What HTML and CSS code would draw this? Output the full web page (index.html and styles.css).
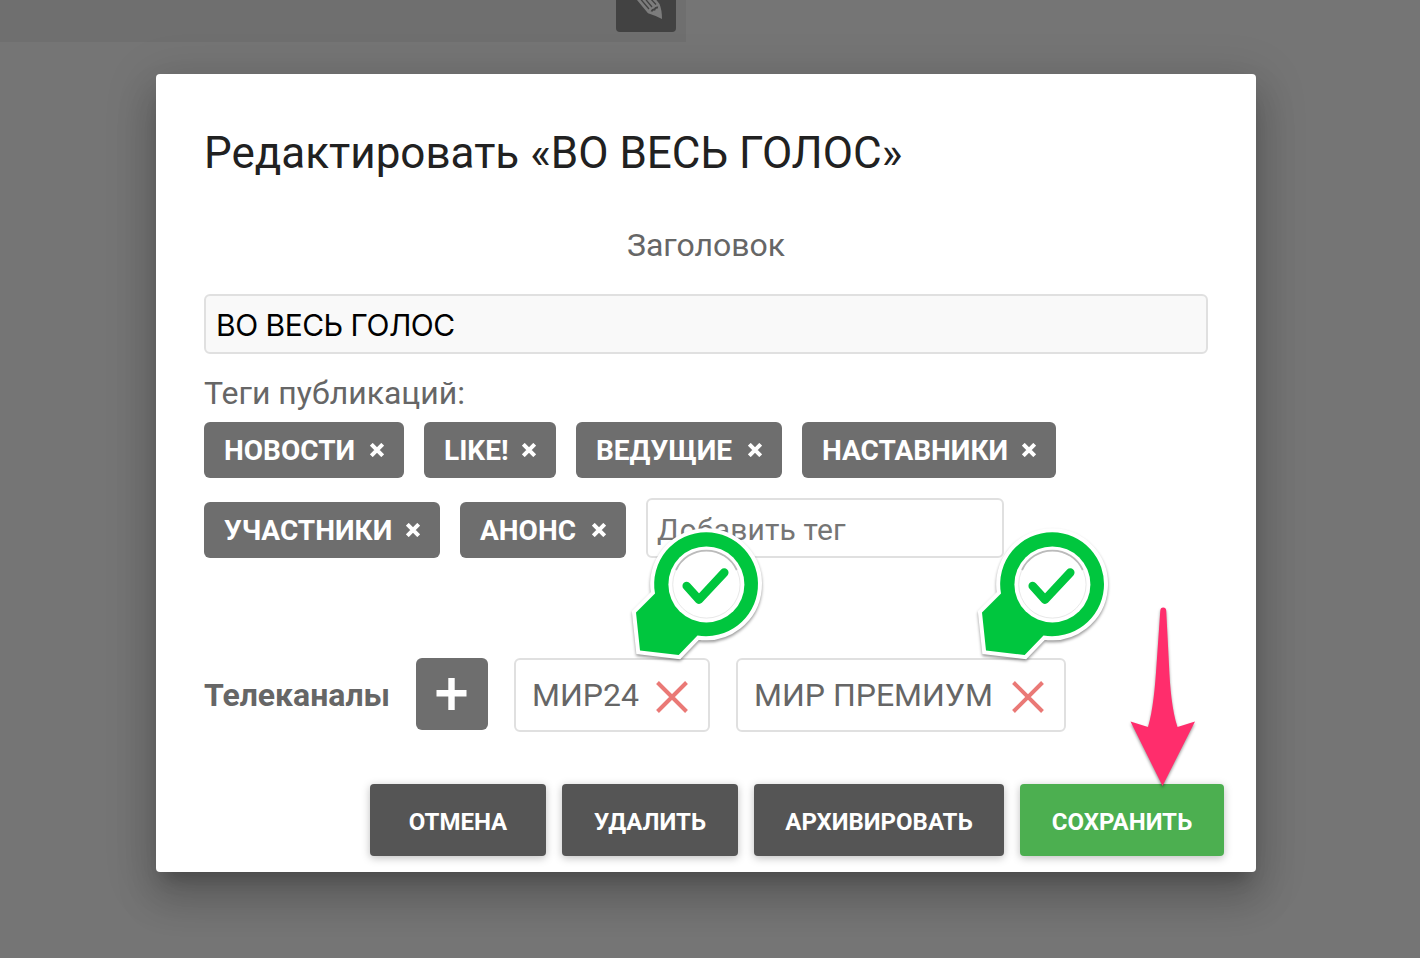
FILE: index.html
```html
<!DOCTYPE html>
<html lang="ru">
<head>
<meta charset="utf-8">
<title>Редактировать</title>
<link rel="stylesheet" href="styles.css">
</head>
<body>
<div class="page">
  <div class="strip">
    <span class="edit"><svg width="60" height="32" viewBox="0 0 60 32"><path d="M13-10L21 0L32 13.3Q39 15.5 46 19Q46 10 43.5 4L31-12Z" fill="#7c7c7c"/><path d="M24.5-1L33 9M28.5-2L36 7M33-3L40 4.5" stroke="#424242" stroke-width="1.3"/><path d="M35.5 11.5Q36.5 9 38.5 9.5Q39.5 7 42 7.5" stroke="#424242" stroke-width="2" fill="none"/></svg></span>
  </div>
  <main class="dialog">
    <h1 class="title">Редактировать «ВО ВЕСЬ ГОЛОС»</h1>
    <label class="caption">Заголовок</label>
    <input class="field" value="ВО ВЕСЬ ГОЛОС">
    <div class="tags-label">Теги публикаций:</div>
    <div class="tags">
      <span class="tag w200">НОВОСТИ<svg class="x" viewBox="0 0 14 14"><path d="M1.3 1.3L12.7 12.7M12.7 1.3L1.3 12.7"/></svg></span>
      <span class="tag w132">LIKE!<svg class="x" viewBox="0 0 14 14"><path d="M1.3 1.3L12.7 12.7M12.7 1.3L1.3 12.7"/></svg></span>
      <span class="tag w206">ВЕДУЩИЕ<svg class="x" viewBox="0 0 14 14"><path d="M1.3 1.3L12.7 12.7M12.7 1.3L1.3 12.7"/></svg></span>
      <span class="tag w254">НАСТАВНИКИ<svg class="x" viewBox="0 0 14 14"><path d="M1.3 1.3L12.7 12.7M12.7 1.3L1.3 12.7"/></svg></span>
    </div>
    <div class="tags second">
      <span class="tag w236">УЧАСТНИКИ<svg class="x" viewBox="0 0 14 14"><path d="M1.3 1.3L12.7 12.7M12.7 1.3L1.3 12.7"/></svg></span>
      <span class="tag w166">АНОНС<svg class="x" viewBox="0 0 14 14"><path d="M1.3 1.3L12.7 12.7M12.7 1.3L1.3 12.7"/></svg></span>
      <input class="add-tag" placeholder="Добавить тег">
    </div>
    <div class="channels">
      <b class="ch-label">Телеканалы</b>
      <button class="plus"><svg width="32" height="32" viewBox="0 0 32 32"><path d="M.5 15.3H30.5M15.5 0V32" stroke="#fff" stroke-width="6.4"/></svg></button>
      <span class="channel c1">МИР24<svg class="cross" viewBox="0 0 32 32"><path d="M1.5 1.5L30.5 30.5M30.5 1.5L1.5 30.5"/></svg></span>
      <span class="channel c2">МИР ПРЕМИУМ<svg class="cross" viewBox="0 0 32 32"><path d="M1.5 1.5L30.5 30.5M30.5 1.5L1.5 30.5"/></svg></span>
    </div>
    <div class="actions">
      <button class="btn w176">ОТМЕНА</button>
      <button class="btn w176">УДАЛИТЬ</button>
      <button class="btn w250">АРХИВИРОВАТЬ</button>
      <button class="btn save">СОХРАНИТЬ</button>
    </div>
  </main>
  <svg class="mark m1" viewBox="0 0 160 150"><use href="#stamp"/></svg>
  <svg class="mark m2" viewBox="0 0 160 150"><use href="#stamp"/></svg>
  <svg class="arrow" viewBox="0 0 90 200"><path d="M30.3 20.5Q30.5 17.5 33.2 17.5Q36 17.5 36.2 20.5L39 75C40 98 42 120 47.5 137L65 131.5L32.5 196L.5 131.5L18 137C23 120 25 98 26.5 75Z" fill="#ff2d6c"/></svg>
  <svg width="0" height="0" class="defs"><defs><g id="stamp">
    <path d="M86.4 12.2A52 52 0 1 1 77.5 115.5L58.7 135L20 130.5L16 92.5L35 73.5A52 52 0 0 1 86.4 12.2Z" fill="#00c63e" stroke="#fff" stroke-width="8" stroke-linejoin="miter" paint-order="stroke"/>
    <circle cx="86.4" cy="64.4" r="38" fill="#fff"/>
    <circle cx="86.4" cy="64.4" r="33.7" fill="none" stroke="#e8e8e8" stroke-width="1"/>
    <path d="M56 50A33.5 33.5 0 0 1 116.8 50" fill="none" stroke="#bbb" stroke-width="1.8"/>
    <path d="M66.7 66L79 79.7L104.3 52.5" fill="none" stroke="#00c63e" stroke-width="8.5" stroke-linecap="round" stroke-linejoin="round"/>
  </g></defs></svg>
</div>
</body>
</html>
```

FILE: styles.css
```css
* { box-sizing: border-box; }
body { margin: 0; font-family: Roboto, sans-serif; color: #666; }
.page { position: relative; width: 1420px; height: 958px; overflow: hidden; background: #757575; }
.strip { width: 686px; height: 42px; background: #6f6f6f; display: flex; justify-content: flex-end; padding-right: 10px; }
.edit { width: 60px; height: 32px; background: #424242; border-radius: 0 0 4px 4px; }
.edit svg { display: block; }
.dialog { width: 1100px; height: 798px; margin: 32px 0 0 156px; padding: 48px 32px 16px 48px; background: #fff; border-radius: 4px; display: flex; flex-direction: column; box-shadow: 0 14px 16px -8px rgba(0,0,0,.2), 0 26px 38px 4px rgba(0,0,0,.14), 0 10px 48px 8px rgba(0,0,0,.12); }
.title { margin: 0; height: 64px; font-weight: 400; font-size: 44px; line-height: 63px; color: #212121; white-space: nowrap; }
.caption { width: 1004px; margin-top: 40px; height: 38px; text-align: center; font-size: 32px; line-height: 38px; }
.field { width: 1004px; height: 60px; margin-top: 30px; padding: 2px 10px 0; border: 2px solid #e0e0e0; border-radius: 6px; background: #f9f9f9; font: 30px Inter, Roboto, sans-serif; letter-spacing: -.5px; color: #000; }
.tags-label { height: 38px; margin-top: 20px; font-size: 32px; line-height: 38px; }
.tags { display: flex; gap: 20px; margin-top: 10px; height: 56px; }
.second { align-items: flex-end; height: 60px; margin-top: 20px; }
.tag { height: 56px; padding: 2px 20px 0; border-radius: 6px; background: #6e6e6e; color: #fff; font-size: 28px; font-weight: 700; line-height: 54px; display: flex; justify-content: space-between; align-items: center; white-space: nowrap; }
.x { width: 14px; height: 14px; flex: none; margin-top: -2px; }
.x path { stroke: #fff; stroke-width: 4; }
.w200 { width: 200px; }
.w132 { width: 132px; }
.w206 { width: 206px; }
.w254 { width: 254px; }
.w236 { width: 236px; }
.w166 { width: 166px; }
.w176 { width: 176px; }
.w250 { width: 250px; }
.add-tag { width: 358px; height: 60px; padding: 2px 9px 0; border: 2px solid #e0e0e0; border-radius: 6px; font: 30px Roboto, sans-serif; letter-spacing: .15px; }
.add-tag::placeholder { color: #757575; opacity: 1; }
.channels { display: flex; margin-top: 100px; height: 74px; align-items: flex-start; }
.ch-label { width: 212px; font-size: 32px; line-height: 74px; font-weight: 700; }
.plus { width: 72px; height: 72px; padding: 0; margin-right: 26px; border: 0; border-radius: 6px; background: #6e6e6e; display: flex; align-items: center; justify-content: center; }
.channel { height: 74px; border: 2px solid #e0e0e0; border-radius: 6px; padding: 0 20px 0 16px; font-size: 32px; line-height: 70px; display: flex; align-items: center; justify-content: space-between; white-space: nowrap; }
.c1 { width: 196px; margin-right: 26px; }
.c2 { width: 330px; }
.cross { width: 32px; height: 32px; flex: none; margin-top: 3px; }
.cross path { stroke: #ea7976; stroke-width: 4; }
.actions { display: flex; justify-content: flex-end; gap: 16px; margin-top: 52px; }
.btn { height: 72px; padding: 4px 0 0; border: 0; border-radius: 4px; background: #555; color: #fff; font: 700 24px Roboto, sans-serif; box-shadow: 0 2px 8px rgba(0,0,0,.26); }
.save { width: 204px; background: #4caf50; }
.defs { position: absolute; }
.mark { position: absolute; width: 160px; height: 150px; top: 520px; filter: drop-shadow(0 2px 1.5px rgba(0,0,0,.4)); }
.m1 { left: 620px; }
.m2 { left: 966px; }
.arrow { position: absolute; left: 1130px; top: 590px; width: 90px; height: 200px; filter: drop-shadow(0 2px 1.5px rgba(0,0,0,.4)); }
```
